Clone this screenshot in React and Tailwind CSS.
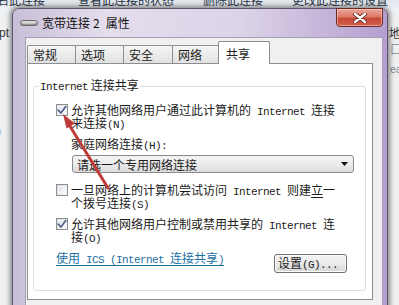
import React from "react";

const L = ({ children, className = "" }) => (
  <span className={"font-['Liberation_Mono'] text-[11px] tracking-[-0.6px] " + className}>{children}</span>
);

const Line = ({ children }) => (
  <div className="h-[13px] leading-[13px] whitespace-nowrap">{children}</div>
);

const CheckBox = ({ checked }) => (
  <div className="mt-[1px] w-[12px] h-[12px] shrink-0 border border-[#8f8f8f] bg-gradient-to-br from-[#d9dce2] to-[#f7f7f8] p-[1px]">
    <div className="w-full h-full border border-[#f4f4f4] bg-gradient-to-br from-[#dfe3ea] to-[#fbfbfc] flex items-center justify-center">
      {checked && (
        <svg width="10" height="10" viewBox="0 0 10 10" className="overflow-visible">
          <path d="M1.2 5.2 L3.9 8 L8.8 1.6" fill="none" stroke="#4e6088" strokeWidth="1.7" strokeLinejoin="round" strokeLinecap="round" />
        </svg>
      )}
    </div>
  </div>
);

const Tab = ({ children, selected, w, first }) =>
  selected ? (
    <div
      className={
        "relative z-10 -mb-px -ml-px h-[23px] bg-white border border-b-0 border-[#8c8e94] rounded-t-[2px] flex items-center pl-[7px] text-[12px] leading-[13px] " +
        w
      }
    >
      {children}
    </div>
  ) : (
    <div
      className={
        "h-[18px] bg-gradient-to-b from-[#f6f6f6] to-[#e1e1e1] border border-b-0 border-[#8c8e94] rounded-t-[2px] flex items-center pl-[5px] text-[12px] leading-[13px] " +
        (first ? "" : "-ml-px ") +
        w
      }
    >
      {children}
    </div>
  );

export default function App() {
  return (
    <div className="relative w-[399px] h-[305px] overflow-hidden bg-[#eff0f2] font-['Noto_Sans_CJK_SC'] text-[12px] text-[#1b1b1b]">
      {/* background window toolbar strip */}
      <div className="absolute left-0 top-0 w-[399px] h-[9px] overflow-hidden bg-gradient-to-b from-[#e2e7ee] to-[#edf0f4]">
        <div className="flex -mt-[7px] ml-[-3px] text-[12px] leading-[14px] text-[#2a3546] whitespace-nowrap">
          <span className="w-[81px]">名此连接</span>
          <span className="w-[125px]">查看此连接的状态</span>
          <span className="w-[89px]">删除此连接</span>
          <span>更改此连接的设置</span>
        </div>
      </div>

      {/* background window fragments */}
      <span className="absolute left-[-1px] top-[26px] text-[12px] leading-[14px] text-[#333] font-['Liberation_Sans']">pt</span>
      <span className="absolute left-[-3px] top-[124px] text-[12px] leading-[14px] text-[#555] font-['Liberation_Sans']">)</span>
      <span className="absolute left-[389px] top-[26px] text-[12px] leading-[14px] text-[#333]">地</span>
      <span className="absolute left-[390px] top-[42px] text-[12px] leading-[14px] text-[#9a9a9a]">口</span>
      <span className="absolute left-[390px] top-[63px] text-[11px] leading-[12px] text-[#8a8a8a] font-['Liberation_Sans']">ea</span>

      {/* dialog window */}
      <div className="absolute left-[12px] top-[8px] w-[376px] h-[310px] rounded-t-[7px] border border-[#5f566d] shadow-[0_0_5px_2px_rgba(0,0,0,0.45)] bg-[linear-gradient(90deg,#c9bed8_0%,#e4ddec_25%,#ddd4e8_60%,#b49fd0_100%)] flex flex-col">
        {/* title bar */}
        <div className="h-[28px] flex items-start shrink-0">
          <div className="flex items-center pl-[7px] pt-[7px] gap-[4px]">
            <svg width="18" height="8" viewBox="0 0 18 8">
              <defs>
                <linearGradient id="mg" x1="0" y1="0" x2="0" y2="1">
                  <stop offset="0" stopColor="#f2f2f2" />
                  <stop offset="0.5" stopColor="#b9b9b9" />
                  <stop offset="1" stopColor="#7c7c7c" />
                </linearGradient>
              </defs>
              <rect x="0.5" y="1.5" width="17" height="5" rx="2.5" fill="url(#mg)" stroke="#6b6b6b" />
              <line x1="3" y1="4" x2="15" y2="4" stroke="#e8e8e8" strokeWidth="0.8" />
            </svg>
            <span className="text-[12px] leading-[14px] text-[#111] whitespace-nowrap">
              宽带连接<span className="ml-[3px] mr-[6px]">2</span>属性
            </span>
          </div>
          <div className="ml-auto mr-[4px] -mt-px w-[47px] h-[19px] rounded-b-[4px] border border-[#6b2a22] bg-[linear-gradient(180deg,#eaa69a_0%,#dc7b6a_45%,#c64a36_55%,#d0604c_100%)] flex items-center justify-center shadow-[inset_0_0_0_1px_rgba(255,220,210,0.5)]">
            <svg width="14" height="10" viewBox="0 0 14 10">
              <path d="M2 1 L12 9 M12 1 L2 9" stroke="#5a1d16" strokeWidth="4" strokeLinecap="round" />
              <path d="M2 1 L12 9 M12 1 L2 9" stroke="#ffffff" strokeWidth="2.4" strokeLinecap="round" />
            </svg>
          </div>
        </div>

        {/* body */}
        <div className="flex-1 flex pl-[12px] pr-[4px]">
          <div className="flex-1 bg-[#f0f0f0] border border-[#a79eb6] pl-[1px] pt-[3px]">
            {/* tabs */}
            <div className="flex items-end h-[22px]">
              <Tab first w="w-[49px]">常规</Tab>
              <Tab w="w-[49px]">选项</Tab>
              <Tab w="w-[50px]">安全</Tab>
              <Tab w="w-[47px]">网络</Tab>
              <Tab selected w="w-[52px]">共享</Tab>
            </div>

            {/* tab panel */}
            <div className="w-[346px] h-[237px] bg-white border border-[#8c8e94] pl-[5px] pr-[6px] pt-[14px]">
              <fieldset className="border border-[#d5dfe5] rounded-[3px] pb-[17px]">
                <legend className="ml-[5px] px-[1px] text-[12px] leading-[14px] whitespace-nowrap">
                  <L>Internet</L> 连接共享
                </legend>

                {/* row 1 */}
                <div className="flex gap-[3px] pl-[22px] mt-[9px]">
                  <CheckBox checked />
                  <div>
                    <Line>
                      允许其他网络用户通过此计算机的<L> Internet </L>连接
                    </Line>
                    <Line>
                      来连接<L>(N)</L>
                    </Line>
                  </div>
                </div>

                <div className="pl-[37px] mt-[8px]">
                  <Line>
                    家庭网络连接<L>(H):</L>
                  </Line>
                </div>

                <div className="ml-[38px] mt-[5px] w-[282px] h-[18px] border border-[#8a8a8a] rounded-[3px] bg-gradient-to-b from-[#f4f4f4] via-[#ebebeb] to-[#dcdcdc] flex items-center pl-[4px] pr-[5px]">
                  <span className="text-[12px] leading-[13px] whitespace-nowrap">请选一个专用网络连接</span>
                  <svg className="ml-auto" width="7" height="4" viewBox="0 0 7 4">
                    <path d="M0 0 L7 0 L3.5 4 Z" fill="#111" />
                  </svg>
                </div>

                {/* row 2 */}
                <div className="flex gap-[3px] pl-[22px] mt-[10px]">
                  <CheckBox />
                  <div>
                    <Line>
                      一旦网络上的计算机尝试访问<L> Internet </L>则建<span className="underline underline-offset-2">立</span>一
                    </Line>
                    <Line>
                      个拨号连接<L>(S)</L>
                    </Line>
                  </div>
                </div>

                {/* row 3 */}
                <div className="flex gap-[3px] pl-[22px] mt-[8px]">
                  <CheckBox checked />
                  <div>
                    <Line>
                      允许其他网络用户控制或禁用共享的<L> Internet </L>连
                    </Line>
                    <Line>
                      接<L>(O)</L>
                    </Line>
                  </div>
                </div>

                {/* link + button */}
                <div className="flex items-start pl-[22px] mt-[8px]">
                  <div className="h-[13px] leading-[13px] whitespace-nowrap text-[#1c6fa2] underline underline-offset-2 decoration-[#1c6fa2]">
                    使用<L> ICS (Internet </L>连接共享<L>)</L>
                  </div>
                  <div className="ml-auto mr-[18px] mt-[3px] w-[73px] h-[19px] border border-[#707070] rounded-[3px] bg-gradient-to-b from-[#f3f3f3] via-[#ebebeb] to-[#d6d6d6] flex items-center pl-[3px] shadow-[inset_0_0_0_1px_#fcfcfc]">
                    <span className="text-[12px] leading-[13px] whitespace-nowrap">
                      设置<L>(G)...</L>
                    </span>
                  </div>
                </div>
              </fieldset>
            </div>
          </div>
        </div>
      </div>

      {/* red annotation arrow */}
      <svg className="absolute left-0 top-0 pointer-events-none" width="399" height="305" viewBox="0 0 399 305">
        <line x1="108" y1="188" x2="68" y2="123" stroke="#bf3b37" strokeWidth="3" strokeLinecap="round" />
        <path d="M63 114 L75 123.5 L66.5 128.5 Z" fill="#bf3b37" />
      </svg>
    </div>
  );
}
